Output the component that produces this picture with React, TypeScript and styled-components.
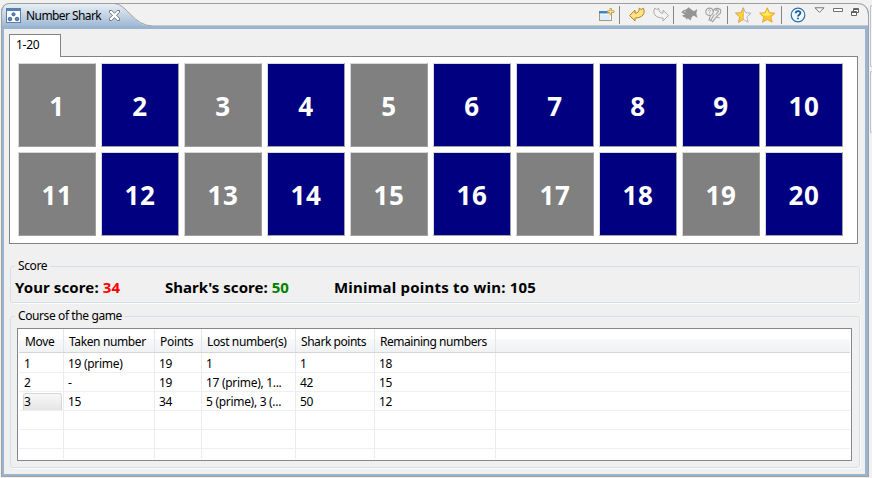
import React from 'react';
import styled, { createGlobalStyle } from 'styled-components';

const GlobalStyle = createGlobalStyle`
  * { box-sizing: border-box; }
  body {
    margin: 0;
    background: #f1f1f1;
    font-family: "Noto Sans", "Open Sans", sans-serif;
    font-size: 12px;
    color: #000;
    overflow: hidden;
  }
`;

const Screen = styled.div`
  display: flex;
  width: 872px;
  height: 478px;
  padding: 3px 0 1px 1px;
`;

const Window = styled.main`
  display: flex;
  flex-direction: column;
  width: 868px;
  height: 474px;
  border: 1px solid #a0a0a0;
  border-top: 0;
  border-radius: 9px 12px 0 0;
`;

const Neighbour = styled.aside`
  display: flex;
  flex-direction: column;
  gap: 4px;
  width: 3px;
  padding: 2px 0 0 1px;
`;

const NeighbourPane = styled.div<{ $height: number }>`
  height: ${p => p.$height}px;
  border: 1px solid #b9c0c6;
  border-right: 0;
  border-radius: 4px 0 0 4px;
  background: #f6f6f6;
`;

const Header = styled.header`
  position: relative;
  display: flex;
  flex: none;
  width: 868px;
  height: 23px;
  margin-left: -1px;
  padding-left: 5px;
`;

const HeaderShape = styled.svg`
  position: absolute;
  inset: 0;
  z-index: -1;
`;

const ViewTitle = styled.div`
  display: flex;
  align-items: center;
  height: 25px;
  width: 588px;
`;

const TitleText = styled.span`
  margin: 0 6px 0 4px;
  width: 77px;
  white-space: nowrap;
  letter-spacing: -0.58px;
`;

const Toolbar = styled.div`
  display: flex;
  align-items: flex-start;
  height: 23px;
`;

const Slot = styled.span<{ $w: number; $top?: number }>`
  display: flex;
  justify-content: center;
  width: ${p => p.$w}px;
  padding-top: ${p => p.$top ?? 4}px;
  svg { flex: none; }
`;

const Divider = styled.span`
  width: 1px;
  height: 18px;
  margin-top: 3px;
  background: #858585;
`;

const Body = styled.section`
  flex: 1;
  border: solid #99b4d1;
  border-width: 3px 3px 2px 2px;
  padding: 5px 0 0 5px;
  background: #f0f0f0;
`;

const FolderTab = styled.div`
  width: 52px;
  height: 23px;
  margin-bottom: -1px;
  padding: 1px 0 0 6px;
  border: 1px solid #838383;
  border-bottom: 0;
  background: #fff;
  position: relative;
  line-height: 17px;
  letter-spacing: -0.3px;
`;

const Board = styled.div`
  display: grid;
  grid-template-columns: repeat(10, 78px);
  grid-auto-rows: 84px;
  gap: 5px;
  width: 849px;
  height: 188px;
  padding: 6px 0 0 8px;
  border: 1px solid #838383;
  background: #fff;
`;

const Tile = styled.div<{ $taken: boolean }>`
  display: flex;
  align-items: center;
  justify-content: center;
  padding-top: 2px;
  border: 1px solid;
  border-color: #d8d8d8 #a0a0a0 #a0a0a0 #d8d8d8;
  background: ${p => (p.$taken ? '#808080' : '#000080')};
  color: #fff;
  font-size: 26px;
  font-weight: 700;
  line-height: 36px;
  letter-spacing: 0.6px;
`;

const Group = styled.fieldset<{ $h: number; $top: number }>`
  width: 850px;
  height: ${p => p.$h}px;
  margin: ${p => p.$top}px 0 0 1px;
  padding: 0 0 0 4px;
  border: 1px solid #d5dfe5;
  border-radius: 3px;
  box-shadow: 1px 1px 0 #fbfbfb;
`;

const Legend = styled.legend`
  height: 16px;
  padding: 0 3px;
  line-height: 16px;
  letter-spacing: -0.4px;
`;

const Scores = styled.div`
  display: grid;
  grid-template-columns: 150px 169px auto;
  padding-top: 2px;
  font-size: 15px;
  font-weight: 700;
  line-height: 22px;
`;

const Score = styled.div<{ $track: number }>`
  white-space: nowrap;
  letter-spacing: ${p => p.$track}px;
`;

const Value = styled.span<{ $color: string }>`
  color: ${p => p.$color};
`;

const Table = styled.div`
  width: 835px;
  height: 133px;
  margin: 4px 0 0 2px;
  padding: 0 1px 1px;
  border: 1px solid #828790;
  background: #fff;
`;

const Row = styled.div<{ $h: number; $head?: boolean }>`
  display: grid;
  grid-template-columns: 45px 91px 47px 94px 79px 121px 1fr;
  height: ${p => p.$h}px;
  border-bottom: 1px solid ${p => (p.$head ? '#d5d5d5' : '#efefef')};
  background: ${p => (p.$head ? 'linear-gradient(#fff 45%, #f7f8fa 46%, #f1f2f4)' : '#fff')};
  &:last-child { border-bottom: 0; }
`;

const Cell = styled.div<{ $head?: boolean; $track?: number; $marked?: boolean; $line?: number }>`
  overflow: hidden;
  padding-left: ${p => (p.$head ? 5 : 4)}px;
  border-right: ${p => (p.$head ? '1px solid #e0e6ec' : '1px solid #e9edf2')};
  line-height: ${p => p.$line ?? 19}px;
  letter-spacing: ${p => p.$track ?? -0.3}px;
  white-space: nowrap;
  &:first-child { padding-left: ${p => (p.$head ? 6 : 5)}px; }
  &:last-child { border-right: 0; }
`;

const MarkedCell = styled.div`
  padding: 1px 1px 0 4px;
  border-right: 1px solid #e9edf2;
`;

const Mark = styled.div`
  height: 17px;
  border: 1px solid #d6d6d6;
  border-bottom: 0;
  border-radius: 3px 3px 0 0;
  background: linear-gradient(#f8f8f8, #e5e5e5);
  line-height: 16px;
`;

const takenNumbers = [1, 3, 5, 11, 13, 15, 17, 19];
const columns: [string, number][] = [
  ['Move', -0.3], ['Taken number', -0.38], ['Points', -0.3],
  ['Lost number(s)', -0.38], ['Shark points', -0.45], ['Remaining numbers', -0.46], ['', 0],
];
const moves = [
  ['1', '19 (prime)', '19', '1', '1', '18'],
  ['2', '-', '19', '17 (prime), 1...', '42', '15'],
  ['3', '15', '34', '5 (prime), 3 (...', '50', '12'],
  [], [], [],
];
const rowHeights = [20, 19, 19, 19, 19, 10];
const markedRow = 2;

const ViewIcon = () => (
  <svg width="16" height="16" viewBox="0 0 16 16">
    <rect x=".5" y=".5" width="14" height="14" fill="#fff" stroke="#5d7fa3" />
    <path d="M1 1h13v2H1z" fill="#4c83bd" />
    <g fill="#5a8ac0" stroke="#2c568c" strokeWidth=".8">
      <circle cx="7.500" cy="6.300" r="1.600" /><circle cx="4" cy="11" r="1.800" /><circle cx="11" cy="11" r="1.800" />
    </g>
  </svg>
);

const CloseIcon = () => (
  <svg width="11" height="11" viewBox="0 0 11 11">
    <path d="M.5.5h2.300l2.700 2.700L8.200.5h2.300v1.900L7.500 5.300l3 3v2.200H8.200L5.500 7.600l-2.700 2.900H.5V8.300l3-3-3-2.900z" fill="#fff" stroke="#727780" />
  </svg>
);

const NewGameIcon = () => (
  <svg width="17" height="16" viewBox="0 0 17 16">
    <rect x="1.500" y="4.500" width="12" height="9" fill="#fff" stroke="#a99c6c" />
    <path d="M1 4h10v2.500H1z" fill="#3d83c5" />
    <path d="M2 7.500h10V13H2z" fill="#d9edfb" />
    <path d="M12 1.500h1.500v2.300H16v1.700h-2.500v2.300H12V5.500H9.500V3.800H12z" fill="#ffefb5" stroke="#c79a35" strokeWidth=".9" />
  </svg>
);

const ArrowIcon = ({ redo = false }: { redo?: boolean }) => (
  <svg width="16" height="15" viewBox="0 0 16 15">
    <g transform={redo ? 'matrix(-1 0 0 1 16 0)' : undefined}>
      <path d="M.6 8.500l5.400-5.300v3c2.800 0 4.300-1.800 4.300-5l2 1.300 2-1.300c2.500 5-.5 9.800-8.300 9.800v3z"
        fill={redo ? '#f4f4f4' : '#ffe28a'} stroke={redo ? '#aaa' : '#b98318'} strokeLinejoin="round" />
    </g>
  </svg>
);

const SharkIcon = () => (
  <svg width="17" height="14" viewBox="0 0 17 14">
    <path d="M.3 5.500Q2 2.800 5.500 2.300L7.500.3l2.500 2 3 2L16.300 2l-1 4.500 1.200 4.200-4-2.200-2 2-1 3-2.700-2.200-1 1.500-1.200-2Q2 10 1 8.500l3-1z" fill="#949494" />
    <circle cx="4" cy="4.800" r=".7" fill="#e9e9e9" />
  </svg>
);

const HintIcon = () => (
  <svg width="17" height="16" viewBox="0 0 17 16" fill="none" stroke="#a0a0a0" strokeWidth="1.100">
    <circle cx="4.500" cy="4.800" r="3.700" />
    <path d="M3.300 3.800c.2-1.500 2.600-1.200 2.200.1-.2.700-1 .8-1 1.800M4.500 6.500v.8" strokeWidth=".9" />
    <path d="M8.300 4.500C8.500.3 15.800.3 15.800 4.500c0 2.500-1.800 3.200-3.500 4.200l-4.600 6-1.900-1.500L9.300 7.500M10.500 4c.5-1.800 3.300-1.200 2.800.4l-2.500 3.200M5.500 8.500L4 13l1.500.5M12 10l2.500 1" />
  </svg>
);

const StarIcon = ({ half = false }: { half?: boolean }) => (
  <svg width="17" height="16" viewBox="0 0 17 16">
    <path d="M8.300.8l2.200 4.900 5.500.5-4.200 3.700 1.300 5.300-4.800-2.700-4.800 2.700 1.300-5.300L.6 6.200l5.500-.5z"
      fill={half ? '#f5f6f8' : '#ffc928'} stroke={half ? '#a9acb1' : '#e6a035'} strokeWidth=".9" />
    {half && <path d="M8.300.8v11.700l-4.800 2.700 1.300-5.300L.6 6.200l5.500-.5z" fill="#ffd23b" stroke="#e6a035" strokeWidth=".7" />}
    {!half && <path d="M8.300 2.500l1.500 4 3.500.4-4 2-5-.7-2-1.500 4.300-.5z" fill="#ffec65" />}
  </svg>
);

const HelpIcon = () => (
  <svg width="16" height="16" viewBox="0 0 16 16" fill="none">
    <circle cx="8" cy="8" r="6.800" fill="#edf7ff" stroke="#2d70af" strokeWidth="1.200" />
    <path d="M5.700 6.200c.2-3 5-2.700 4.700 0C10.200 7.700 8 7.700 8 9.500M8 10.700v1.600" stroke="#1f5990" strokeWidth="1.800" />
  </svg>
);

const MenuIcon = () => (
  <svg width="11" height="7" viewBox="0 0 11 7"><path d="M1 .8h9L5.500 5.300z" fill="#fff" stroke="#707070" /></svg>
);
const MinimizeIcon = () => (
  <svg width="10" height="5" viewBox="0 0 10 5"><path d="M.5.5h9v3h-9z" fill="#fff" stroke="#707070" /></svg>
);
const RestoreIcon = () => (
  <svg width="9" height="9" viewBox="0 0 9 9" fill="#fff" stroke="#646464">
    <path d="M2.500.5h5v4h-5zM2.500 1.500h5M.5 3.500h5v4h-5zM.5 4.500h5" />
  </svg>
);

export default function App() {
  return (
    <>
      <GlobalStyle />
      <Screen>
        <Window>
          <Header>
            <HeaderShape width="868" height="25" viewBox="0 0 868 25">
              <defs>
                <linearGradient id="tab" x1="0" y1="0" x2="0" y2="1">
                  <stop offset="0" stopColor="#eaf0f6" /><stop offset="1" stopColor="#99b4d1" />
                </linearGradient>
              </defs>
              <path d="M.5 25V9Q1 .5 9 .5H113C126 .5 132 23.500 152 23.500V25z" fill="url(#tab)" />
              <path d="M.5 25V9Q1 .5 9 .5H856Q867.500 .5 867.500 12M113 .5C126 .5 132 23 152 23H867" fill="none" stroke="#a0a0a0" />
            </HeaderShape>
            <ViewTitle>
              <ViewIcon />
              <TitleText>Number Shark</TitleText>
              <CloseIcon />
            </ViewTitle>
            <Toolbar>
              <Slot $w={25}><NewGameIcon /></Slot>
              <Divider />
              <Slot $w={33}><ArrowIcon /></Slot>
              <Slot $w={15}><ArrowIcon redo /></Slot>
              <Slot $w={5} />
              <Divider />
              <Slot $w={31}><SharkIcon /></Slot>
              <Slot $w={17}><HintIcon /></Slot>
              <Slot $w={5} />
              <Divider />
              <Slot $w={31}><StarIcon half /></Slot>
              <Slot $w={17}><StarIcon /></Slot>
              <Slot $w={5} />
              <Divider />
              <Slot $w={32}><HelpIcon /></Slot>
              <Slot $w={10}><MenuIcon /></Slot>
              <Slot $w={27} $top={5}><MinimizeIcon /></Slot>
              <Slot $w={9} $top={5}><RestoreIcon /></Slot>
            </Toolbar>
          </Header>
          <Body>
            <FolderTab>1-20</FolderTab>
            <Board>
              {Array.from({ length: 20 }, (_, i) => i + 1).map(n => (
                <Tile key={n} $taken={takenNumbers.includes(n)}>{n}</Tile>
              ))}
            </Board>
            <Group $h={45} $top={14}>
              <Legend>Score</Legend>
              <Scores>
                <Score $track={0.1}>Your score: <Value $color="#f00">34</Value></Score>
                <Score $track={0.04}>Shark's score: <Value $color="#008000">50</Value></Score>
                <Score $track={0.21}>Minimal points to win: 105</Score>
              </Scores>
            </Group>
            <Group $h={160} $top={5}>
              <Legend>Course of the game</Legend>
              <Table>
                <Row $h={24} $head>
                  {columns.map(([name, track]) => (
                    <Cell key={name} $head $track={track} $line={25}>{name}</Cell>
                  ))}
                </Row>
                {moves.map((cells, r) => (
                  <Row key={r} $h={rowHeights[r]}>
                    {columns.map(([name], c) => r === markedRow && c === 0
                      ? <MarkedCell key={name}><Mark>{cells[c]}</Mark></MarkedCell>
                      : <Cell key={name} $line={r === 0 ? 21 : 19}>{cells[c]}</Cell>)}
                  </Row>
                ))}
              </Table>
            </Group>
          </Body>
        </Window>
        <Neighbour>
          <NeighbourPane $height={62} />
          <NeighbourPane $height={62} />
        </Neighbour>
      </Screen>
    </>
  );
}
